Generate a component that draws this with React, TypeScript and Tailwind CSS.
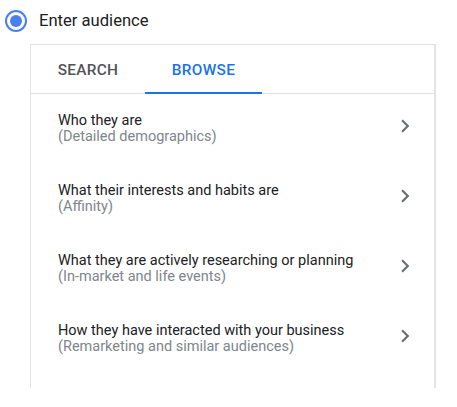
import React from "react";

const rows = [
  ["Who they are", "(Detailed demographics)"],
  ["What their interests and habits are", "(Affinity)"],
  ["What they are actively researching or planning", "(In-market and life events)"],
  ["How they have interacted with your business", "(Remarketing and similar audiences)"],
];

function Chevron() {
  return (
    <svg width="26" height="26" viewBox="0 0 24 24" className="shrink-0">
      <path d="M10 6L8.59 7.41 13.17 12l-4.58 4.59L10 18l6-6z" fill="#6b6f73" />
    </svg>
  );
}

export default function App() {
  return (
    <div className="w-[457px] h-[407px] bg-white font-['Roboto',sans-serif] overflow-hidden">
      <div className="h-[44px] flex items-center pl-[5px] pb-[2px]">
        <div className="w-[22px] h-[22px] rounded-full border-2 border-[#4a80ec] flex items-center justify-center">
          <div className="w-[12px] h-[12px] rounded-full bg-[#4a80ec]" />
        </div>
        <span className="ml-[12px] text-[16.6px] text-[#202124] leading-none">Enter audience</span>
      </div>
      <div className="ml-[30px] w-[406px] h-[344px] border-l border-r-2 border-t border-[#e3e3e3]">
        <div className="h-[49px] flex border-b border-[#e3e3e3]">
          <div className="w-[114px] flex items-center justify-center pt-[3px] text-[15.4px] font-medium text-[#505357] tracking-[0.3px]">
            SEARCH
          </div>
          <div className="relative w-[117px] flex items-center justify-center pt-[3px] text-[15.4px] font-medium text-[#1a73e8] tracking-[0.3px]">
            BROWSE
            <div className="absolute left-0 right-0 bottom-[-1px] h-[2px] bg-[#1a73e8]" />
          </div>
        </div>
        {rows.map(([a, b]) => (
          <div key={a} className="h-[70px] flex items-center pl-[27px] pr-[16px]">
            <div className="flex-1 text-[14.5px] leading-[16px]">
              <div className="text-[#202124]">{a}</div>
              <div className="text-[#80868b]">{b}</div>
            </div>
            <div className="mb-[6px]">
              <Chevron />
            </div>
          </div>
        ))}
      </div>
    </div>
  );
}
